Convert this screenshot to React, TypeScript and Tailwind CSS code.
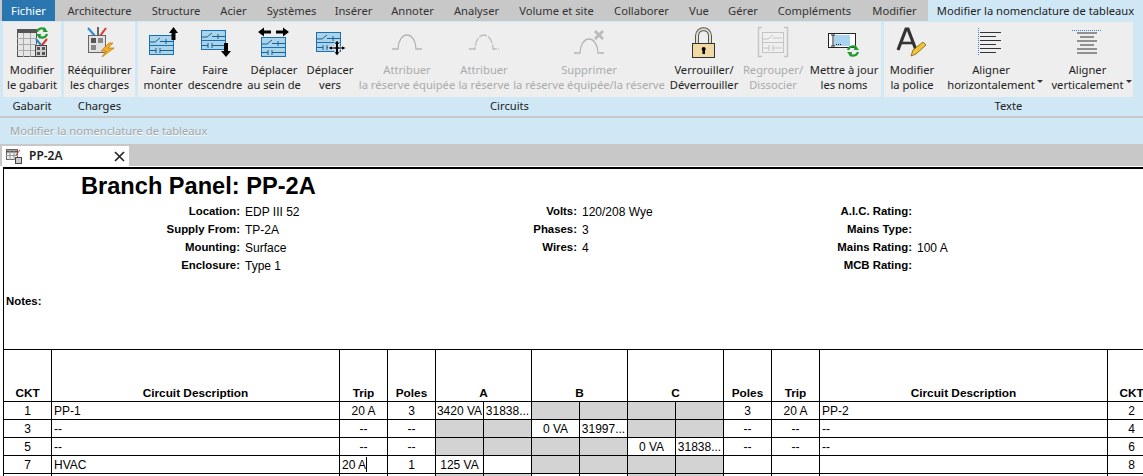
import React from 'react';

const tabs = [
  { label: 'Architecture', w: 'w-[85px]' },
  { label: 'Structure', w: 'w-[68px]' },
  { label: 'Acier', w: 'w-[47px]' },
  { label: 'Systèmes', w: 'w-[69px]' },
  { label: 'Insérer', w: 'w-[55px]' },
  { label: 'Annoter', w: 'w-[63px]' },
  { label: 'Analyser', w: 'w-[65px]' },
  { label: 'Volume et site', w: 'w-[95px]' },
  { label: 'Collaborer', w: 'w-[75px]' },
  { label: 'Vue', w: 'w-[40px]' },
  { label: 'Gérer', w: 'w-[48px]' },
  { label: 'Compléments', w: 'w-[95px]' },
  { label: 'Modifier', w: 'w-[65px]' },
];

const Refresh = ({ x, y }: { x: number; y: number }) => (
  <g transform={`translate(${x} ${y})`} fill="none" stroke="#1f9a2e" strokeWidth="2.2">
    <path d="M1 5 A5 5 0 0 1 9.5 3" />
    <path d="M11 7 A5 5 0 0 1 2.5 9" />
    <path d="M8 0 L12 5 L7 5 Z" fill="#1f9a2e" stroke="none" />
    <path d="M4 12 L0 7 L5 7 Z" fill="#1f9a2e" stroke="none" />
  </g>
);

const Circuit = ({ x, y }: { x: number; y: number }) => (
  <g transform={`translate(${x} ${y})`}>
    <rect x="0.5" y="0.5" width="24" height="19" fill="#a9d4ea" stroke="#1a70b4" />
    <path d="M0 10.5 H24" stroke="#1a70b4" />
    <path d="M1 7 H6 L11 3 M11 6.5 H24 M17 4 V9" fill="none" stroke="#1a5f96" />
    <path d="M1 15.5 H7 M7 13 V18 M11 13 V18 M11 15.5 H24" fill="none" stroke="#1a5f96" />
  </g>
);

const Arrow = ({ d }: { d: string }) => <path d={d} fill="#000" />;

const icons: Record<string, React.ReactNode> = {
  gabarit: (
    <>
      <rect x="9.5" y="5.5" width="19" height="27" fill="#e6e6e6" stroke="#555" />
      <rect x="9" y="5" width="20" height="4" fill="#555" />
      <path d="M9 14.5 H29 M9 20.5 H29 M9 26.5 H29 M15.5 9 V33 M22.5 9 V33" stroke="#aaa" />
      <Refresh x={28} y={3} />
      <path d="M28 15 L33 21" stroke="#2d7fd0" strokeWidth="2" />
      <path d="M39 15 L34 21" stroke="#d8362a" strokeWidth="2" />
      <rect x="27.5" y="21.5" width="11" height="11" fill="#cfcfcf" stroke="#444" />
      <rect x="29" y="23" width="3" height="3" fill="#555" />
      <rect x="34" y="23" width="3" height="3" fill="#555" />
      <rect x="29" y="28" width="3" height="3" fill="#555" />
      <rect x="34" y="28" width="3" height="3" fill="#555" />
    </>
  ),
  charges: (
    <>
      <path d="M12 4 L19 12" stroke="#2d8ad8" strokeWidth="2" />
      <path d="M22 3 V12" stroke="#666" strokeWidth="2" />
      <path d="M30 4 L24 12" stroke="#e0352a" strokeWidth="2" />
      <rect x="12.5" y="11.5" width="17" height="17" fill="#e2e2e2" stroke="#666" />
      <rect x="15" y="14" width="5" height="5" fill="#555" />
      <rect x="22" y="14" width="5" height="5" fill="#888" />
      <rect x="15" y="21" width="5" height="5" fill="#888" />
      <path d="M33 19 L25 27 H30 L26 33 L38 24 H32 L37 19 Z" fill="#f2ac2c" stroke="#c47d10" strokeWidth="0.8" />
    </>
  ),
  monter: (
    <>
      <Circuit x={10} y={11} />
      <Arrow d="M34.5 3 L39 9 H36.5 V16 H32.5 V9 H30 Z" />
    </>
  ),
  descendre: (
    <>
      <Circuit x={10} y={6} />
      <Arrow d="M33 19 H37 V27 H40 L35 33 L30 27 H33 Z" />
    </>
  ),
  sein: (
    <>
      <Circuit x={11} y={13} />
      <Arrow d="M8 8 L14 3.5 V6.5 H21 V9.5 H14 V12.5 Z" />
      <Arrow d="M39 8 L33 3.5 V6.5 H26 V9.5 H33 V12.5 Z" />
    </>
  ),
  vers: (
    <>
      <Circuit x={10} y={8} />
      <path d="M31 16 L34 20 H32.5 V23 H36 V21.5 L40 24 L36 26.5 V25 H32.5 V28 H34 L31 32 L28 28 H29.5 V25 H26 V26.5 L22 24 L26 21.5 V23 H29.5 V20 H28 Z" fill="#000" stroke="#fff" strokeWidth="0.8" />
    </>
  ),
  equipee: <path d="M9 25 H15 A9 14 0 0 1 33 25 H39" fill="none" stroke="#b5b5b5" strokeWidth="1.3" />,
  reserve: <path d="M9 25 H15 A9 14 0 0 1 33 25 H39" fill="none" stroke="#bbb" strokeWidth="1.3" strokeDasharray="8 1.5" />,
  supprimer: (
    <>
      <path d="M9 29 H15 A9 14 0 0 1 33 29 H39" fill="none" stroke="#b5b5b5" strokeWidth="1.3" />
      <path d="M30 7 L38 15 M38 7 L30 15" stroke="#bbb" strokeWidth="2.8" />
    </>
  ),
  lock: (
    <>
      <path d="M17 20 V12 C17 3 30 3 30 12 V20" fill="none" stroke="#555" strokeWidth="4" />
      <path d="M17 20 V12 C17 3 30 3 30 12 V20" fill="none" stroke="#e3e0d0" strokeWidth="2" />
      <rect x="12.5" y="19.5" width="22" height="14" fill="#f0d9a4" stroke="#333" />
      <rect x="22.5" y="25" width="2.5" height="5" fill="#000" />
      <circle cx="23.7" cy="25" r="2" fill="#000" />
    </>
  ),
  regrouper: (
    <>
      <rect x="13.5" y="8.5" width="21" height="20" fill="#f0f0f0" stroke="#c4c4c4" />
      <path d="M13 18.5 H34 M14 15 H19 L24 11 M24 14 H33 M14 24 H20 M20 21 V27 M24 21 V27 M24 24 H33" fill="none" stroke="#c4c4c4" />
      <path d="M13 3.5 H9.5 V32.5 H13 M35 3.5 H38.5 V32.5 H35" fill="none" stroke="#c4c4c4" strokeWidth="1.4" />
    </>
  ),
  noms: (
    <>
      <rect x="8.5" y="9.5" width="27" height="14" fill="#fff" stroke="#222" />
      <rect x="14" y="11" width="16" height="11" fill="#a9d4f0" />
      <path d="M11 11 H15 M13 11 V22 M11 22 H15" stroke="#222" fill="none" />
      <path d="M16 20.5 H21" stroke="#222" strokeDasharray="1 1" />
      <Refresh x={27} y={21} />
    </>
  ),
  police: (
    <>
      <path d="M10 26 L18 5 H20 L28 26" fill="none" stroke="#333" strokeWidth="3.2" />
      <path d="M13 19 H25" stroke="#333" strokeWidth="2.6" />
      <path d="M23 32 L25 26 L35 18 L38 21 L28 30 Z" fill="#f5c436" stroke="#7a5a10" strokeWidth="0.8" />
    </>
  ),
  horiz: (
    <>
      <path d="M11.5 4 V31" stroke="#3b86dc" strokeDasharray="1 1" />
      <path d="M13 8.5 H34 M13 12.5 H29 M13 16.5 H34 M13 20.5 H29 M13 24.5 H34 M13 28.5 H29" stroke="#333" strokeWidth="1.1" />
    </>
  ),
  vert: (
    <>
      <path d="M8 6.5 H37" stroke="#3b86dc" strokeDasharray="1 1" />
      <path d="M13 9 H33 M16 13 H30 M13 17 H33 M16 21 H30 M13 25 H33 M13 29 H33" stroke="#333" strokeWidth="1.1" />
    </>
  ),
};

type Btn = { icon: string; lines: [string, string]; w: string; off?: boolean; menu?: boolean };

const circuitButtons: Btn[] = [
  { icon: 'monter', lines: ['Faire', 'monter'], w: 'w-[50px]' },
  { icon: 'descendre', lines: ['Faire', 'descendre'], w: 'w-[54px]' },
  { icon: 'sein', lines: ['Déplacer', 'au sein de'], w: 'w-[64px]' },
  { icon: 'vers', lines: ['Déplacer', 'vers'], w: 'w-[48px]' },
  { icon: 'equipee', lines: ['Attribuer', 'la réserve équipée'], w: 'w-[106px]', off: true },
  { icon: 'reserve', lines: ['Attribuer', 'la réserve'], w: 'w-[48px]', off: true },
  { icon: 'supprimer', lines: ['Supprimer', 'la réserve équipée/la réserve'], w: 'w-[162px]', off: true },
  { icon: 'lock', lines: ['Verrouiller/', 'Déverrouiller'], w: 'w-[68px]' },
  { icon: 'regrouper', lines: ['Regrouper/', 'Dissocier'], w: 'w-[70px]', off: true },
  { icon: 'noms', lines: ['Mettre à jour', 'les noms'], w: 'w-[72px]' },
];

const RibbonButton = ({ icon, lines, w, off, menu }: Btn) => (
  <div className={`${w} shrink-0 flex flex-col items-center ${off ? 'text-[#ababab]' : 'text-[#222]'}`}>
    <svg width="48" height="38" viewBox="0 0 48 38" className="mt-[2px] shrink-0 overflow-visible">
      {icons[icon]}
    </svg>
    <div className="text-center leading-[15px] whitespace-nowrap">
      <div>{lines[0]}</div>
      <div className="relative">
        {lines[1]}
        {menu && <span className="absolute -right-[8px] top-[3px] w-0 h-0 border-x-[3px] border-x-transparent border-t-[3px] border-t-[#333]" />}
      </div>
    </div>
  </div>
);

const Group = ({ title, w, children }: { title: string; w: string; children: React.ReactNode }) => (
  <div className={`${w} shrink-0 flex flex-col`}>
    <div className="h-[75px] bg-[#eeeeee] flex">{children}</div>
    <div className="h-[18px] flex items-center justify-center text-[#222]">{title}</div>
  </div>
);

const info = [
  ['Location:', 'EDP III 52', 'Volts:', '120/208 Wye', 'A.I.C. Rating:', ''],
  ['Supply From:', 'TP-2A', 'Phases:', '3', 'Mains Type:', ''],
  ['Mounting:', 'Surface', 'Wires:', '4', 'Mains Rating:', '100 A'],
  ['Enclosure:', 'Type 1', '', '', 'MCB Rating:', ''],
];

const G = 'gray';

type Row = { l: string; desc: string; trip: string; poles: string; phases: string[]; pr: string; tr: string; dr: string; r: string; edit?: boolean };

const rows: Row[] = [
  { l: '1', desc: 'PP-1', trip: '20 A', poles: '3', phases: ['3420 VA', '31838...', G, G, G, G], pr: '3', tr: '20 A', dr: 'PP-2', r: '2' },
  { l: '3', desc: '--', trip: '--', poles: '--', phases: [G, G, '0 VA', '31997...', G, G], pr: '--', tr: '--', dr: '--', r: '4' },
  { l: '5', desc: '--', trip: '--', poles: '--', phases: [G, G, G, G, '0 VA', '31838...'], pr: '--', tr: '--', dr: '--', r: '6' },
  { l: '7', desc: 'HVAC', trip: '20 A', poles: '1', phases: ['125 VA', '', G, G, G, G], pr: '', tr: '', dr: '', r: '8', edit: true },
  { l: '', desc: '', trip: '', poles: '', phases: [G, G, '', '', G, G], pr: '', tr: '', dr: '', r: '' },
];

const td = 'border border-black h-[18px] p-0 text-center whitespace-nowrap overflow-hidden leading-[16px]';
const th = 'border border-black p-0 pb-[1px] font-bold text-[11.8px] leading-[14px] text-center align-bottom whitespace-nowrap';

export default function App() {
  return (
    <div className="w-[1143px] h-[476px] overflow-hidden bg-white flex flex-col font-['Noto_Sans',sans-serif] text-[11.2px]">
      {/* tabs */}
      <div className="h-[21px] bg-[#c8c8c8] flex items-stretch shrink-0 text-[#333]">
        <div className="w-[2px]" />
        <div className="w-[53px] pt-[2px] bg-[#2a76b0] text-white flex items-center justify-center">Fichier</div>
        <div className="w-[2px]" />
        {tabs.map((t) => (
          <div key={t.label} className={`${t.w} pt-[2px] flex items-center justify-center`}>{t.label}</div>
        ))}
        <div className="w-px" />
        <div className="flex-1 pt-[2px] bg-[#d0e8f5] flex items-center justify-center text-[#222]">Modifier la nomenclature de tableaux</div>
      </div>

      {/* ribbon */}
      <div className="h-[94px] bg-[#d0e8f5] flex gap-[3px] pl-[3px] pt-[1px] border-b-2 border-[#c8c8c8] box-content shrink-0">
        <Group title="Gabarit" w="w-[58px]">
          <RibbonButton icon="gabarit" lines={['Modifier', 'le gabarit']} w="w-[58px]" />
        </Group>
        <Group title="Charges" w="w-[71px]">
          <RibbonButton icon="charges" lines={['Rééquilibrer', 'les charges']} w="w-[71px]" />
        </Group>
        <Group title="Circuits" w="w-[743px]">
          {circuitButtons.map((b) => <RibbonButton key={b.icon} {...b} />)}
        </Group>
        <Group title="Texte" w="w-[249px]">
          <RibbonButton icon="police" lines={['Modifier', 'la police']} w="w-[56px]" />
          <RibbonButton icon="horiz" lines={['Aligner', 'horizontalement']} w="w-[102px]" menu />
          <RibbonButton icon="vert" lines={['Aligner', 'verticalement']} w="w-[91px]" menu />
        </Group>
      </div>

      {/* contextual bar */}
      <div className="h-[26px] bg-[#d0e8f5] flex items-center pl-[10px] text-[#a3a3a3] [text-shadow:0_1px_0_#fff] shrink-0">
        Modifier la nomenclature de tableaux
      </div>

      {/* view tabs */}
      <div className="h-[22px] bg-[#c8c8c8] flex items-end pl-[2px] shrink-0">
        <div className="w-[127px] h-[20px] bg-white flex items-center pl-[4px] pr-[4px] text-[#222]">
          <svg width="16" height="16" viewBox="0 0 16 16">
            <rect x="0.5" y="1.5" width="11" height="10" fill="#eee" stroke="#666" />
            <path d="M0 3.5 H12" stroke="#555" strokeWidth="2" />
            <path d="M0 7.5 H12 M4 3 V12 M8 3 V12" stroke="#999" />
            <path d="M10 7 L14 2" stroke="#d8362a" />
            <rect x="9.5" y="9.5" width="6" height="6" fill="#ccc" stroke="#444" />
          </svg>
          <span className="ml-[7px] font-semibold text-[12px] flex-1">PP-2A</span>
          <svg width="11" height="11" viewBox="0 0 11 11">
            <path d="M1 1 L10 10 M10 1 L1 10" stroke="#222" strokeWidth="1.6" />
          </svg>
        </div>
      </div>

      {/* schedule */}
      <div className="flex-1 min-h-0 overflow-hidden bg-white pl-[3px] pt-[1px] font-['Liberation_Sans',sans-serif] text-[12px] text-black">
        <div className="w-[1200px] border-t-2 border-l border-black">
          <div className="h-[180px] flex flex-col">
            <div className="pl-[77px] h-[34px] flex items-center pt-[2px] text-[23.6px] font-bold">Branch Panel: PP-2A</div>
            <div className="grid grid-cols-[236px_250px_87px_248px_87px_1fr] auto-rows-[18px] items-center">
              {info.flat().map((v, i) =>
                i % 2 === 0
                  ? <div key={i} className="text-right font-bold text-[11.4px] whitespace-nowrap">{v}</div>
                  : <div key={i} className="pl-[5px] whitespace-nowrap">{v}</div>
              )}
            </div>
            <div className="pl-[2px] mt-[18px] font-bold text-[11.4px]">Notes:</div>
          </div>
          <table className="table-fixed border-collapse w-[1152px] -ml-px">
            <colgroup>
              <col className="w-[48px]" />
              <col className="w-[288px]" />
              {Array.from({ length: 10 }).map((_, i) => <col key={i} className="w-[48px]" />)}
              <col className="w-[288px]" />
              <col className="w-[48px]" />
            </colgroup>
            <thead>
              <tr className="h-[52px]">
                <th className={th}>CKT</th>
                <th className={th}>Circuit Description</th>
                <th className={th}>Trip</th>
                <th className={th}>Poles</th>
                <th className={th} colSpan={2}>A</th>
                <th className={th} colSpan={2}>B</th>
                <th className={th} colSpan={2}>C</th>
                <th className={th}>Poles</th>
                <th className={th}>Trip</th>
                <th className={th}>Circuit Description</th>
                <th className={th}>CKT</th>
              </tr>
            </thead>
            <tbody>
              {rows.map((r, i) => (
                <tr key={i}>
                  <td className={td}>{r.l}</td>
                  <td className={`${td} text-left pl-[2px]`}>{r.desc}</td>
                  <td className={td}>
                    {r.edit
                      ? <div className="text-left pl-[2px] flex"><span>20 A</span><span className="w-px h-[15px] bg-black" /></div>
                      : r.trip}
                  </td>
                  <td className={td}>{r.poles}</td>
                  {r.phases.map((p, j) => (
                    <td key={j} className={`${td} ${p === G ? 'bg-[#d3d3d3]' : ''}`}>{p === G ? '' : p}</td>
                  ))}
                  <td className={td}>{r.pr}</td>
                  <td className={td}>{r.tr}</td>
                  <td className={`${td} text-left pl-[2px]`}>{r.dr}</td>
                  <td className={td}>{r.r}</td>
                </tr>
              ))}
            </tbody>
          </table>
        </div>
      </div>
    </div>
  );
}
